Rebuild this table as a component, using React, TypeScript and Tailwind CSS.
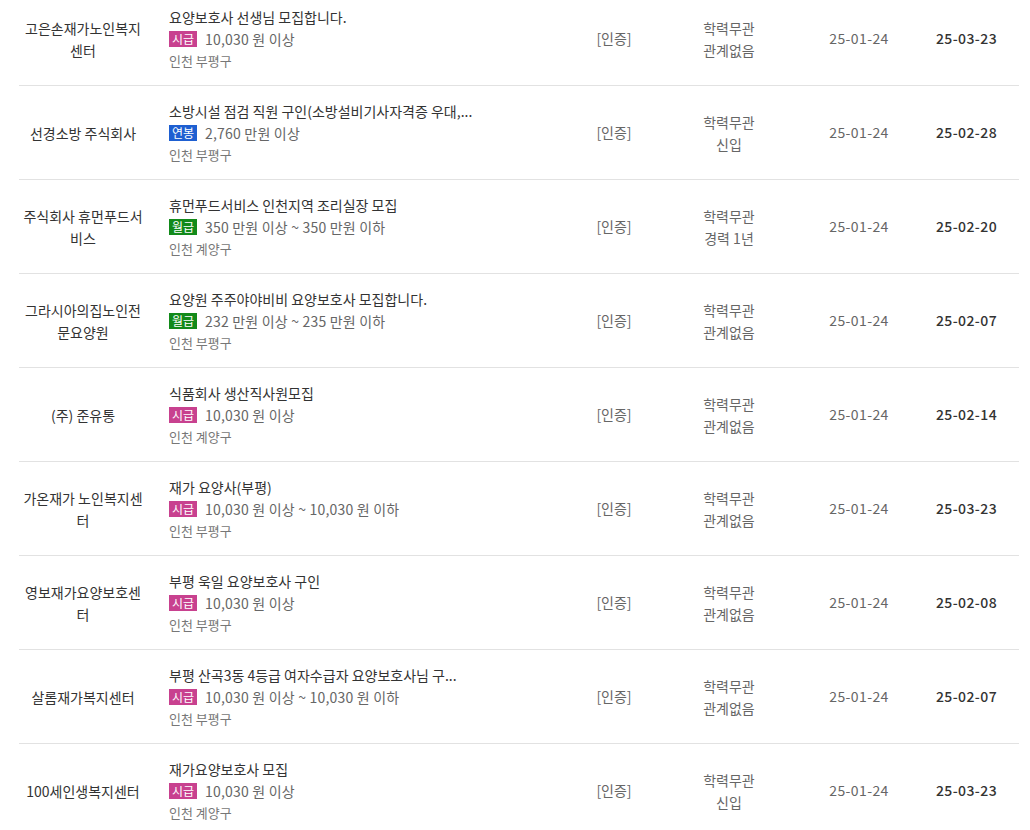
const rows = [
  { company: "고은손재가노인복지센터", title: "요양보호사 선생님 모집합니다.", pay: "시급", amount: "10,030 원 이상", area: "인천 부평구", career: "관계없음", reg: "25-01-24", end: "25-03-23" },
  { company: "선경소방 주식회사", title: "소방시설 점검 직원 구인(소방설비기사자격증 우대,...", pay: "연봉", amount: "2,760 만원 이상", area: "인천 부평구", career: "신입", reg: "25-01-24", end: "25-02-28" },
  { company: "주식회사 휴먼푸드서비스", title: "휴먼푸드서비스 인천지역 조리실장 모집", pay: "월급", amount: "350 만원 이상 ~ 350 만원 이하", area: "인천 계양구", career: "경력 1년", reg: "25-01-24", end: "25-02-20" },
  { company: "그라시아의집노인전문요양원", title: "요양원 주주야야비비 요양보호사 모집합니다.", pay: "월급", amount: "232 만원 이상 ~ 235 만원 이하", area: "인천 부평구", career: "관계없음", reg: "25-01-24", end: "25-02-07" },
  { company: "(주) 준유통", title: "식품회사 생산직사원모집", pay: "시급", amount: "10,030 원 이상", area: "인천 계양구", career: "관계없음", reg: "25-01-24", end: "25-02-14" },
  { company: "가온재가 노인복지센터", title: "재가 요양사(부평)", pay: "시급", amount: "10,030 원 이상 ~ 10,030 원 이하", area: "인천 부평구", career: "관계없음", reg: "25-01-24", end: "25-03-23" },
  { company: "영보재가요양보호센터", title: "부평 욱일 요양보호사 구인", pay: "시급", amount: "10,030 원 이상", area: "인천 부평구", career: "관계없음", reg: "25-01-24", end: "25-02-08" },
  { company: "살롬재가복지센터", title: "부평 산곡3동 4등급 여자수급자 요양보호사님 구...", pay: "시급", amount: "10,030 원 이상 ~ 10,030 원 이하", area: "인천 부평구", career: "관계없음", reg: "25-01-24", end: "25-02-07" },
  { company: "100세인생복지센터", title: "재가요양보호사 모집", pay: "시급", amount: "10,030 원 이상", area: "인천 계양구", career: "신입", reg: "25-01-24", end: "25-03-23" },
];

const badgeColor: Record<string, string> = {
  시급: "bg-[#c8418f]",
  연봉: "bg-[#1e5fd1]",
  월급: "bg-[#128a1a]",
};

export default function App() {
  return (
    <div className="h-[830px] overflow-hidden bg-white font-['Noto_Sans_CJK_KR',sans-serif] text-[14px] text-[#333]">
      <div className="-mt-[8px] px-[19px] pr-[11px]">
        {rows.map((r, i) => (
          <div
            key={i}
            className="grid h-[94px] grid-cols-[128px_427px_80px_150px_110px_105px] items-center border-b border-[#e2e2e2]"
          >
            <div className="break-all px-[2px] text-center leading-[22px]">{r.company}</div>
            <div className="pl-[22px]">
              <div className="truncate leading-[22px]">{r.title}</div>
              <div className="flex items-center leading-[22px]">
                <span className={`${badgeColor[r.pay]} flex h-[16px] w-[28px] items-center justify-center text-[12px] leading-none text-white`}>
                  {r.pay}
                </span>
                <span className="ml-[8px] tracking-[0.2px] text-[#666]">{r.amount}</span>
              </div>
              <div className="text-[13px] leading-[21px] text-[#777]">{r.area}</div>
            </div>
            <div className="text-center text-[#666]">[인증]</div>
            <div className="text-center leading-[22px] text-[#666]">
              <div>학력무관</div>
              <div>{r.career}</div>
            </div>
            <div className="text-center tracking-[0.4px] text-[#666]">{r.reg}</div>
            <div className="text-center font-medium tracking-[0.4px] text-[#333]">{r.end}</div>
          </div>
        ))}
      </div>
    </div>
  );
}
